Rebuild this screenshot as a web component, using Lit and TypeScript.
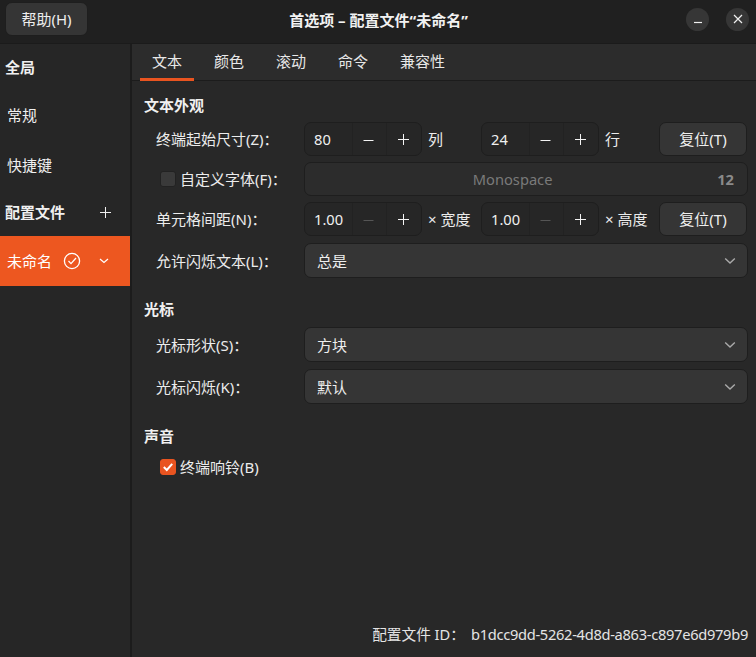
import { LitElement, html, css, svg } from "lit";
import { customElement } from "lit/decorators.js";

const plus = () => html`<svg class="ic" width="13" height="13" viewBox="0 0 13 13"><path d="M6.5 1v11M1 6.5h11" stroke="currentColor" stroke-width="1" fill="none"/></svg>`;
const minus = (dim = false) => html`<svg class="ic ${dim ? "dim" : ""}" width="13" height="13" viewBox="0 0 13 13"><path d="M1.5 7.5h10" stroke="currentColor" stroke-width="1" fill="none"/></svg>`;
const chev = () => svg`<svg class="chev" width="12" height="8" viewBox="0 0 12 8"><path d="M1.2 1.5 6 6l4.8-4.5" stroke="currentColor" stroke-width="1.4" fill="none"/></svg>`;

@customElement("app-root")
export class AppRoot extends LitElement {
  static styles = css`
    :host { display: block; height: 100vh; width: 756px; overflow: hidden; background: #282828; color: #f0f0f0;
      font-family: "Noto Sans", "Noto Sans CJK SC", sans-serif; font-size: 15px; line-height: 20px; }
    * { box-sizing: border-box; }
    .win { display: flex; flex-direction: column; height: 100%; }
    header { height: 43px; flex: none; background: #202020; display: flex; align-items: center; padding: 0 7px 0 5px; }
    .help { width: 83px; height: 34px; margin-top: -5px; }
    .title { flex: 1; text-align: center; font-weight: 700; padding-right: 17px; margin-top: -3px; color: #f2f2f2; }
    .wc { display: flex; gap: 17px; margin-top: -5px; }
    .wc span { width: 23px; height: 23px; border-radius: 50%; background: #363636; display: flex; align-items: center; justify-content: center; color: #f0f0f0; }
    .body { flex: 1; display: flex; min-height: 0; border-top: 1px solid #1b1b1b; }
    aside { width: 132px; flex: none; background: #262626; border-right: 2px solid #1c1c1c; }
    .si { display: flex; align-items: center; padding-left: 7px; height: 48px; padding-bottom: 2px; }
    .si.b { font-weight: 700; padding-left: 5px; justify-content: space-between; padding-right: 18px; }
    .si.h50 { height: 50px; padding-bottom: 0; }
    .si.h46 { height: 46px; }
    .si.sel { height: 50px; padding-bottom: 0; background: #ed5720; color: #fff; gap: 11px; }
    main { flex: 1; display: flex; flex-direction: column; min-width: 0; }
    nav { height: 37px; flex: none; background: #2c2c2c; border-bottom: 1px solid #1c1c1c; display: flex; gap: 8px; padding-left: 8px; }
    .tab { padding: 0 12px; height: 37px; display: flex; align-items: center; padding-bottom: 3px; color: #e8e8e8; }
    .tab.on { border-bottom: 3px solid #e95420; padding-bottom: 0; }
    .pane { flex: 1; display: flex; flex-direction: column; padding: 14px 8px 13px 12px; }
    h3 { margin: 0; font-size: 15px; font-weight: 700; line-height: 20px; color: #f0f0f0; }
    .grid { display: grid; grid-template-columns: 148px 1fr; row-gap: 6px; padding-left: 12px; margin-top: 7px; align-items: center; }
    .grid.g7 { row-gap: 7px; margin-top: 8px; }
    .lab { color: #ececec; }
    .lab.cb { display: flex; align-items: center; gap: 4px; padding-left: 4px; }
    .lab.low, .dd.low { margin-top: 1px; }
    .box { width: 16px; height: 16px; border-radius: 3px; background: #3a3a3a; border: 1px solid #222; flex: none; }
    .box.on { background: #e95420; border-color: #e95420; display: flex; align-items: center; justify-content: center; }
    .r5 { display: grid; grid-template-columns: 118px 59px 118px 60px 88px; align-items: center; }
    .spin { height: 34px; display: flex; border: 1px solid #1e1e1e; border-radius: 7px; background: #262626; }
    .spin .num { width: 47px; padding-left: 9px; display: flex; align-items: center; color: #f0f0f0; font-size: 14.67px; }
    .spin .sb { width: 35px; display: flex; align-items: center; justify-content: center; border-left: 1px solid #222; color: #f4f4f4; padding-right: 2px; }
    .ic { display: block; }
    .ic.dim { color: #555; }
    .unit { padding-left: 6px; white-space: nowrap; color: #ececec; }
    .btn { height: 34px; border: 1px solid #1e1e1e; border-radius: 7px; background: #353535; display: flex; align-items: center; justify-content: center; color: #eee; }
    .font { height: 34px; border: 1px solid #1e1e1e; border-radius: 7px; background: #2c2c2c; display: flex; align-items: center; padding: 0 13px; gap: 10px; color: #7a7a7a; font-size: 14.67px; }
    .font .nm { flex: 1; text-align: center; }
    .font b { color: #8a8a8a; font-weight: 700; }
    .dd { height: 35px; border: 1px solid #1e1e1e; border-radius: 7px; background: #353535; display: flex; align-items: center; justify-content: space-between; padding: 0 11px 0 12px; color: #eee; }
    .chev { color: #aaa; display: block; }
    .arrow { margin-left: 6px; }
    .sec2 { margin-top: 21px; }
    .sec3 { margin-top: 22px; }
    .chk { display: flex; align-items: center; gap: 4px; padding-left: 16px; margin-top: 11px; color: #ececec; }
    .foot { margin-top: auto; display: flex; justify-content: flex-end; gap: 6px; color: #e4e4e4; font-size: 14.67px; }
    .foot .id { letter-spacing: -0.3px; }
  `;

  render() {
    return html`<div class="win">
      <header>
        <div class="btn help">帮助(H)</div>
        <div class="title">首选项 – 配置文件“未命名”</div>
        <div class="wc">
          <span><svg width="12" height="12" viewBox="0 0 12 12"><path d="M2 9.5h8" stroke="currentColor" stroke-width="1.2"/></svg></span>
          <span><svg width="12" height="12" viewBox="0 0 12 12"><path d="M2 2l8 8M10 2l-8 8" stroke="currentColor" stroke-width="1.2"/></svg></span>
        </div>
      </header>
      <div class="body">
        <aside>
          <div class="si b">全局</div>
          <div class="si">常规</div>
          <div class="si h50">快捷键</div>
          <div class="si b h46">配置文件 ${plus()}</div>
          <div class="si sel">未命名
            <svg width="18" height="18" viewBox="0 0 18 18" fill="none"><circle cx="9" cy="9" r="7.6" stroke="#fff" stroke-width="1.3"/><path d="M5.5 9l2.5 2.6 5-5.6" stroke="#fff" stroke-width="1.3"/></svg>
            <svg class="arrow" width="12" height="8" viewBox="0 0 12 8" fill="none"><path d="M2 2 6 5.5 10 2" stroke="#fff" stroke-width="1.2"/></svg>
          </div>
        </aside>
        <main>
          <nav>
            <div class="tab on">文本</div><div class="tab">颜色</div><div class="tab">滚动</div><div class="tab">命令</div><div class="tab">兼容性</div>
          </nav>
          <div class="pane">
            <h3>文本外观</h3>
            <div class="grid">
              <div class="lab">终端起始尺寸(Z)：</div>
              <div class="r5">
                ${this.spin("80")}<div class="unit">列</div>${this.spin("24")}<div class="unit">行</div><div class="btn">复位(T)</div>
              </div>
              <div class="lab cb"><span class="box"></span>自定义字体(F)：</div>
              <div class="font"><span class="nm">Monospace</span><b>12</b></div>
              <div class="lab">单元格间距(N)：</div>
              <div class="r5">
                ${this.spin("1.00", true)}<div class="unit">× 宽度</div>${this.spin("1.00", true)}<div class="unit">× 高度</div><div class="btn">复位(T)</div>
              </div>
              <div class="lab low">允许闪烁文本(L)：</div>
              <div class="dd low">总是 ${chev()}</div>
            </div>
            <h3 class="sec2">光标</h3>
            <div class="grid g7">
              <div class="lab">光标形状(S)：</div><div class="dd">方块 ${chev()}</div>
              <div class="lab">光标闪烁(K)：</div><div class="dd">默认 ${chev()}</div>
            </div>
            <h3 class="sec3">声音</h3>
            <div class="chk"><span class="box on"><svg width="12" height="12" viewBox="0 0 12 12" fill="none"><path d="M1.8 6l3 3 5.4-6.2" stroke="#fff" stroke-width="2"/></svg></span>终端响铃(B)</div>
            <div class="foot"><span>配置文件 ID：</span><span class="id">b1dcc9dd-5262-4d8d-a863-c897e6d979b9</span></div>
          </div>
        </main>
      </div>
    </div>`;
  }

  spin(v: string, dimMinus = false) {
    return html`<div class="spin"><div class="num">${v}</div><div class="sb">${minus(dimMinus)}</div><div class="sb">${plus()}</div></div>`;
  }
}
